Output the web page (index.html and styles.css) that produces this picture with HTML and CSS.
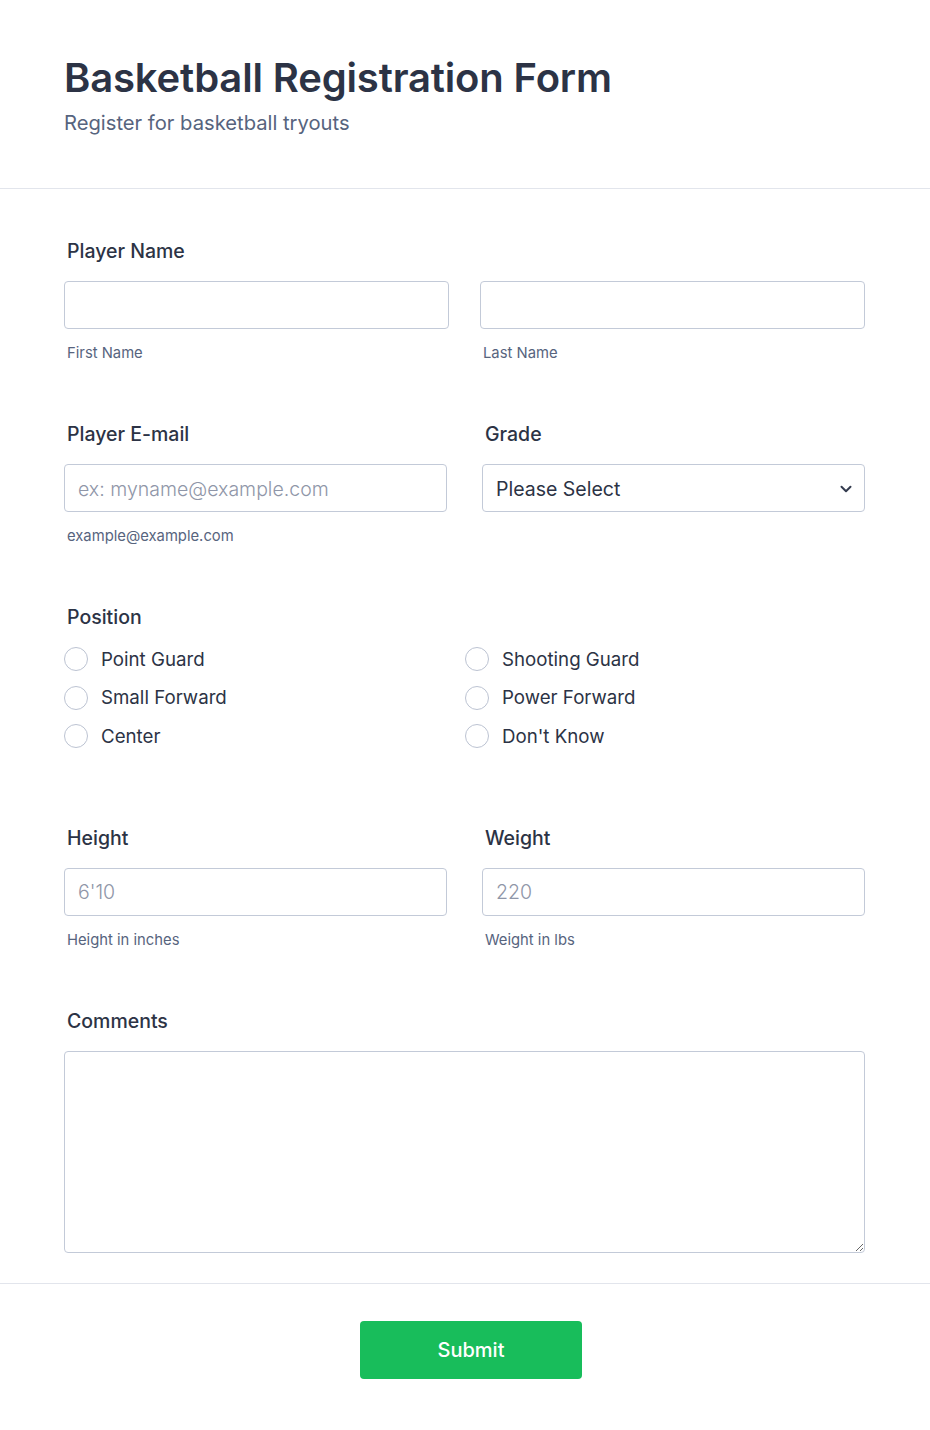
FILE: index.html
```html
<!DOCTYPE html>
<html lang="en">
<head>
<meta charset="utf-8">
<title>Basketball Registration Form</title>
<link rel="stylesheet" href="styles.css">
</head>
<body>
<div class="page">
  <header class="form-header">
    <h1 class="form-title">Basketball Registration Form</h1>
    <p class="form-subtitle">Register for basketball tryouts</p>
  </header>

  <form class="form-body">
    <div class="field">
      <div class="label">Player Name</div>
      <div class="row row-name">
        <div class="col">
          <input class="input" type="text">
          <div class="sublabel">First Name</div>
        </div>
        <div class="col">
          <input class="input" type="text">
          <div class="sublabel">Last Name</div>
        </div>
      </div>
    </div>

    <div class="row row-pair">
      <div class="field">
        <div class="label">Player E-mail</div>
        <input class="input" type="email" placeholder="ex: myname@example.com">
        <div class="sublabel">example@example.com</div>
      </div>
      <div class="field">
        <div class="label">Grade</div>
        <div class="select">
          <span>Please Select</span>
          <svg class="chev" width="12" height="8" viewBox="0 0 12 8"><path d="M1.5 1.8 6 6.2l4.5-4.4" fill="none" stroke="#343c4f" stroke-width="2" stroke-linecap="round" stroke-linejoin="round"/></svg>
        </div>
      </div>
    </div>

    <div class="field field-position">
      <div class="label">Position</div>
      <div class="radios">
        <label class="radio"><span class="circle"></span>Point Guard</label>
        <label class="radio"><span class="circle"></span>Shooting Guard</label>
        <label class="radio"><span class="circle"></span>Small Forward</label>
        <label class="radio"><span class="circle"></span>Power Forward</label>
        <label class="radio"><span class="circle"></span>Center</label>
        <label class="radio"><span class="circle"></span>Don't Know</label>
      </div>
    </div>

    <div class="row row-pair">
      <div class="field">
        <div class="label">Height</div>
        <input class="input" type="text" placeholder="6'10">
        <div class="sublabel">Height in inches</div>
      </div>
      <div class="field">
        <div class="label">Weight</div>
        <input class="input" type="text" placeholder="220">
        <div class="sublabel">Weight in lbs</div>
      </div>
    </div>

    <div class="field">
      <div class="label">Comments</div>
      <textarea class="textarea"></textarea>
    </div>
  </form>

  <footer class="form-footer">
    <button class="submit" type="button">Submit</button>
  </footer>
</div>
</body>
</html>
```

FILE: styles.css
```css
* { box-sizing: border-box; }
html, body { margin: 0; padding: 0; background: #fff; }
body {
  font-family: Inter, "Noto Sans", "Liberation Sans", sans-serif;
  color: #2c3345;
}
.page { width: 930px; }

.form-header {
  padding: 54px 64px 0;
  height: 189px;
  border-bottom: 1px solid #e2e5ec;
}
.form-title {
  margin: 0;
  font-size: 40px;
  line-height: 48px;
  font-weight: 600;
  color: #2c3345;
  letter-spacing: -0.15px;
}
.form-subtitle {
  margin: 8px 0 0;
  font-size: 20.2px;
  line-height: 26px;
  color: #57647e;
}

.form-body {
  padding: 50px 65px 30px 64px;
  display: flex;
  flex-direction: column;
  gap: 60px;
  border-bottom: 1px solid #e2e5ec;
}
.field { display: flex; flex-direction: column; }
.label {
  font-size: 19.5px;
  line-height: 24px;
  font-weight: 500;
  padding-left: 3px;
  margin-bottom: 18px;
  color: #2c3345;
}
.row { display: grid; grid-template-columns: 1fr 1fr; }
.row-name { column-gap: 31px; }
.row-pair { column-gap: 35px; }
.col { display: flex; flex-direction: column; }

.input, .select {
  height: 48px;
  width: 100%;
  border: 1px solid #c3cad8;
  border-radius: 4px;
  background: #fff;
  font-family: inherit;
  font-size: 19.5px;
  color: #2c3345;
  padding: 1px 13px 0;
  outline: none;
}
.input::placeholder { color: #8f96a8; font-weight: 300; }
.select {
  display: flex;
  align-items: center;
  justify-content: space-between;
  padding: 1px 12px 0 13px;
}
.chev { display: block; }
.sublabel {
  margin-top: 15px;
  font-size: 14.8px;
  line-height: 18px;
  color: #57647e;
  padding-left: 3px;
}

.field-position { margin-bottom: 10px; }
.field-position .label { margin-bottom: 11px; }
.radios {
  display: grid;
  grid-template-columns: 401px 1fr;
  grid-auto-rows: 38.5px;
}
.radio {
  display: flex;
  align-items: center;
  gap: 13px;
  font-size: 18.7px;
  color: #2c3345;
}
.circle {
  width: 24px;
  height: 24px;
  border: 1px solid #bcc3d2;
  border-radius: 50%;
  flex: none;
}

.textarea {
  display: block;
  width: 100%;
  height: 202px;
  border: 1px solid #c3cad8;
  border-radius: 4px;
  resize: vertical;
  font-family: inherit;
  font-size: 16px;
  outline: none;
}

.form-footer {
  display: flex;
  justify-content: center;
  padding: 37px 0 50px 12px;
}
.submit {
  width: 222px;
  height: 58px;
  border: none;
  border-radius: 4px;
  background: #18bd5b;
  color: #fff;
  font-family: inherit;
  font-size: 20px;
  font-weight: 500;
  cursor: pointer;
}
```
